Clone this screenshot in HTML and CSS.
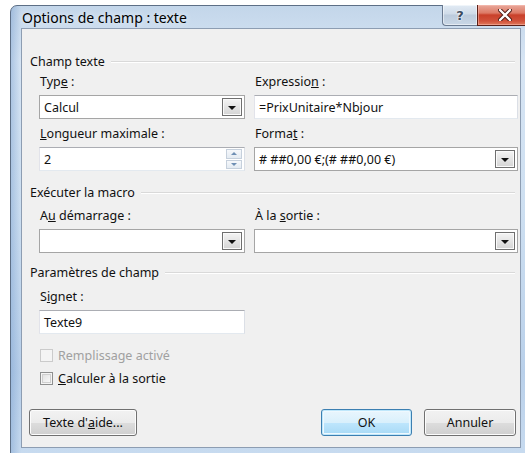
FILE: index.html
```html
<!DOCTYPE html>
<html lang="fr">
<head>
<meta charset="utf-8">
<title>Options de champ : texte</title>
<link rel="stylesheet" href="styles.css">
</head>
<body>
<div class="window">
  <div class="titlebar">
    <span class="title">Options de champ : texte</span>
    <div class="caption-btns">
      <div class="cap-btn help"><span>?</span></div>
      <div class="cap-btn close">
        <svg width="14" height="12" viewBox="0 0 14 12">
          <path d="M2 1 L12 11 M12 1 L2 11" stroke="#4a1a14" stroke-width="4.2" stroke-linecap="round"/>
          <path d="M2 1 L12 11 M12 1 L2 11" stroke="#fff" stroke-width="2.4" stroke-linecap="round"/>
        </svg>
      </div>
    </div>
  </div>

  <div class="client">
    <div class="group-title first"><span>Champ texte</span></div>
    <div class="grid">
      <div class="field">
        <label>Typ<u>e</u> :</label>
        <div class="combo"><span class="value">Calcul</span><span class="drop"><i></i></span></div>
      </div>
      <div class="field">
        <label>Expressio<u>n</u> :</label>
        <div class="edit"><span class="value">=PrixUnitaire*Nbjour</span></div>
      </div>
      <div class="field">
        <label><u>L</u>ongueur maximale :</label>
        <div class="edit spin-edit"><span class="value">2</span>
          <span class="spin"><b class="up"><i></i></b><b class="down"><i></i></b></span>
        </div>
      </div>
      <div class="field">
        <label>Forma<u>t</u> :</label>
        <div class="combo"><span class="value">#&nbsp;##0,00 €;(#&nbsp;##0,00 €)</span><span class="drop"><i></i></span></div>
      </div>
    </div>

    <div class="group-title second"><span>Exécuter la macro</span></div>
    <div class="grid macro">
      <div class="field">
        <label>A<u>u</u> démarrage :</label>
        <div class="combo"><span class="value"></span><span class="drop"><i></i></span></div>
      </div>
      <div class="field">
        <label>À la <u>s</u>ortie :</label>
        <div class="combo"><span class="value"></span><span class="drop"><i></i></span></div>
      </div>
    </div>

    <div class="group-title third"><span>Paramètres de champ</span></div>
    <div class="grid params">
      <div class="field">
        <label>S<u>i</u>gnet :</label>
        <div class="edit"><span class="value">Texte9</span></div>
      </div>
    </div>
    <div class="checks">
      <div class="check disabled"><span class="box"></span><span>Remplissage activé</span></div>
      <div class="check"><span class="box"></span><span><u>C</u>alculer à la sortie</span></div>
    </div>

    <div class="buttons">
      <div class="button help-text">Texte d'<u>a</u>ide...</div>
      <div class="spacer"></div>
      <div class="button default">OK</div>
      <div class="button">Annuler</div>
    </div>
  </div>
</div>
</body>
</html>
```

FILE: styles.css
```css
html, body {
  margin: 0;
  padding: 0;
}

body {
  width: 525px;
  height: 453px;
  overflow: hidden;
  background: #ffffff;
  font-family: "Noto Sans", "Open Sans", sans-serif;
  font-size: 12.5px;
  color: #111;
}

/* Aero glass frame */
.window {
  margin: 5px 0 0 10px;
  width: 530px;
  height: 460px;
  box-sizing: border-box;
  border: 1px solid #5d6f86;
  border-radius: 7px 7px 0 0;
  background:
    linear-gradient(90deg, rgba(110,150,200,0.40) 0px, rgba(255,255,255,0) 10px),
    linear-gradient(180deg, #c3d6ea 0%, #d7e5f4 12%, #cddff1 45%, #b9d0ea 80%, #c9dcf0 100%);
  padding: 0 0 0 10px;
  position: relative;
}

.titlebar {
  height: 21px;
  display: flex;
  align-items: center;
  position: relative;
}

.title {
  padding-left: 1px;
  font-size: 14px;
  color: #000;
  text-shadow: 0 0 6px rgba(255,255,255,0.9);
  margin-top: 1px;
}

.caption-btns {
  position: absolute;
  top: -1px;
  left: 421px;
  display: flex;
}

.cap-btn {
  height: 21px;
  box-sizing: border-box;
  border: 1px solid #6a7a90;
  border-top: none;
  display: flex;
  align-items: center;
  justify-content: center;
}

.cap-btn.help {
  width: 35px;
  border-radius: 0 0 0 4px;
  border-right: none;
  background: linear-gradient(180deg, #e2ebf5 0%, #cfdbe8 45%, #bccbdc 50%, #c9d7e6 100%);
  box-shadow: inset 0 0 0 1px rgba(255,255,255,0.5);
}

.cap-btn.help span {
  font-family: "DejaVu Sans", sans-serif;
  font-weight: bold;
  font-size: 13px;
  color: #3b4b5f;
  text-shadow: 0 0 2px #fff, 0 0 2px #fff;
}

.cap-btn.close {
  width: 56px;
  border-color: #5a1f17;
  background: linear-gradient(180deg, #e9a99c 0%, #dd7a66 40%, #c9402a 50%, #d1523b 80%, #e07a5c 100%);
  box-shadow: inset 0 0 0 1px rgba(255,200,190,0.45);
}

/* Dialog client area */
.client {
  width: 500px;
  height: 420px;
  box-sizing: border-box;
  margin-top: 1px;
  border: 1px solid #8d9db2;
  background: #f0f0f0;
  padding: 0 4px 0 8px;
  display: flex;
  flex-direction: column;
}

.group-title {
  display: flex;
  align-items: center;
  height: 16px;
  line-height: 16px;
}

.group-title.first { margin-top: 25px; }
.group-title.second { margin-top: 14px; }
.group-title.third { margin-top: 12px; }

.group-title::after {
  content: "";
  flex: 1;
  margin-left: 6px;
  margin-right: 1px;
  border-top: 1px solid #d9d9d9;
  border-bottom: 1px solid #ffffff;
}

.grid {
  display: grid;
  grid-template-columns: 206px 264px;
  column-gap: 9px;
  row-gap: 7px;
  padding-left: 9px;
  margin-top: 4px;
}

.grid.macro { margin-top: 7px; }
.grid.params { margin-top: 8px; }

.field {
  display: flex;
  flex-direction: column;
}

.field label {
  height: 16px;
  line-height: 16px;
  padding-left: 1px;
  margin-bottom: 5px;
}

.combo, .edit {
  height: 24px;
  box-sizing: border-box;
  background: #fff;
  border: 1px solid #abadb3;
  border-color: #abadb3 #dbdfe6 #e3e9ef #e2e3ea;
  display: flex;
  align-items: center;
}

.combo {
  border-color: #a5a5a5;
}

.value {
  flex: 1;
  padding-left: 4px;
  padding-top: 1px;
  white-space: nowrap;
  overflow: hidden;
}

.drop {
  width: 20px;
  height: 18px;
  margin-right: 2px;
  box-sizing: border-box;
  border: 1px solid #6f6f6f;
  background: linear-gradient(180deg, #f4f4f4 0%, #e4e4e4 50%, #d4d4d4 100%);
  box-shadow: inset 0 0 0 1px #fafafa;
  display: flex;
  align-items: center;
  justify-content: center;
}

.drop i {
  width: 0;
  height: 0;
  border-left: 4px solid transparent;
  border-right: 4px solid transparent;
  border-top: 4px solid #111;
  margin-top: 1px;
}

.spin {
  width: 16px;
  height: 20px;
  margin-right: 2px;
  display: flex;
  flex-direction: column;
  gap: 1px;
}

.spin b {
  flex: 1;
  box-sizing: border-box;
  border: 1px solid #c6d0dc;
  background: linear-gradient(180deg, #f6f8fb, #e4ebf2);
  display: flex;
  align-items: center;
  justify-content: center;
}

.spin .up i {
  border-left: 3px solid transparent;
  border-right: 3px solid transparent;
  border-bottom: 3px solid #6f8fb4;
}

.spin .down i {
  border-left: 3px solid transparent;
  border-right: 3px solid transparent;
  border-top: 3px solid #6f8fb4;
}

.checks {
  display: flex;
  flex-direction: column;
  gap: 7px;
  padding-left: 10px;
  margin-top: 13px;
}

.check {
  display: flex;
  align-items: center;
  height: 16px;
  gap: 5px;
}

.check .box {
  width: 13px;
  height: 13px;
  box-sizing: border-box;
  border: 1px solid #8e8f8f;
  background: linear-gradient(135deg, #dcdcdc 0%, #f4f4f4 70%, #fff 100%);
  box-shadow: inset 0 0 0 1px #f4f4f4, inset 0 0 0 2px #cfcfcf;
}

.check.disabled {
  color: #a0a0a0;
}

.check.disabled .box {
  border-color: #cbcbcb;
  background: #f4f4f4;
  box-shadow: none;
}

.buttons {
  display: flex;
  align-items: center;
  margin-top: 23px;
  gap: 12px;
}

.spacer {
  flex: 1;
}

.button {
  height: 27px;
  box-sizing: border-box;
  border: 1px solid #707070;
  border-radius: 3px;
  background: linear-gradient(180deg, #f2f2f2 0%, #ebebeb 50%, #dddddd 51%, #cfcfcf 100%);
  box-shadow: inset 0 0 0 1px #fcfcfc;
  display: flex;
  align-items: center;
  justify-content: center;
  width: 92px;
}

.button.help-text {
  width: 108px;
  margin-left: -1px;
}

.button.default {
  border-color: #3c7fb1;
  background: linear-gradient(180deg, #eaf6fd 0%, #d9f0fc 50%, #bee6fd 51%, #a7d9f5 100%);
  box-shadow: inset 0 0 0 1px #bfe7fb, inset 0 0 0 2px #eef8fe;
  width: 91px;
}
```
